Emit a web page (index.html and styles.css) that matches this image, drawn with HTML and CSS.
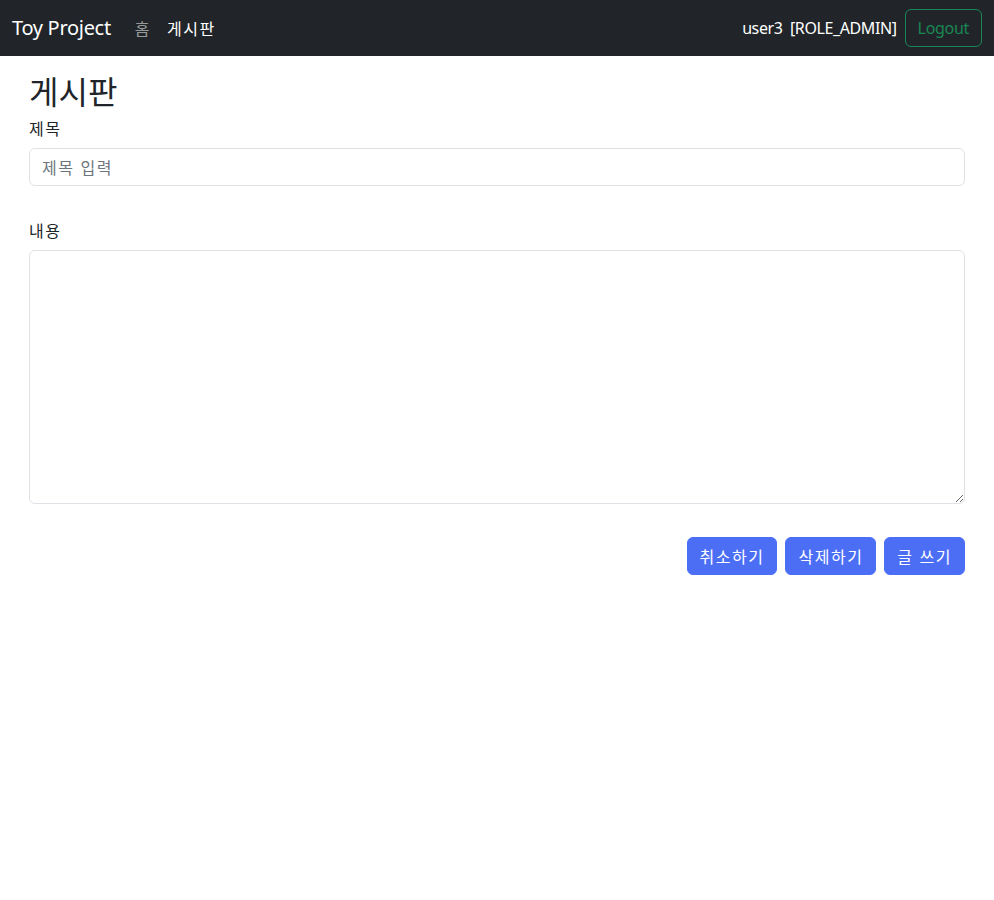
FILE: index.html
```html
<!DOCTYPE html>
<html lang="ko">
<head>
<meta charset="utf-8">
<title>Toy Project</title>
<link rel="stylesheet" href="styles.css">
</head>
<body>
<nav class="navbar">
  <div class="nav-inner">
    <div class="nav-left">
      <a class="brand" href="#">Toy Project</a>
      <ul class="nav-links">
        <li><a class="nav-link" href="#">홈</a></li>
        <li><a class="nav-link active" href="#">게시판</a></li>
      </ul>
    </div>
    <div class="nav-right">
      <span class="user">user3&nbsp; [ROLE_ADMIN]</span>
      <button class="btn-outline-success" type="button">Logout</button>
    </div>
  </div>
</nav>
<main class="container">
  <h2 class="title">게시판</h2>
  <form class="board-form">
    <div class="field field-title">
      <label class="label" for="title">제목</label>
      <input class="control" id="title" type="text" placeholder="제목 입력">
    </div>
    <div class="field">
      <label class="label" for="content">내용</label>
      <textarea class="control area" id="content" rows="10"></textarea>
    </div>
    <div class="actions">
      <button class="btn-primary" type="button">취소하기</button>
      <button class="btn-primary" type="button">삭제하기</button>
      <button class="btn-primary" type="button">글 쓰기</button>
    </div>
  </form>
</main>
</body>
</html>
```
FILE: styles.css
```css
* { box-sizing: border-box; }
html, body {
  margin: 0;
  padding: 0;
}
body {
  font-family: "Noto Sans", "Noto Sans CJK KR", sans-serif;
  font-size: 16px;
  line-height: 24px;
  color: #212529;
  background: #fff;
}
.navbar {
  background: #212529;
  height: 56px;
}
.nav-inner {
  height: 56px;
  padding: 0 12px;
  display: flex;
  align-items: center;
  justify-content: space-between;
}
.nav-left {
  display: flex;
  align-items: center;
}
.brand {
  font-size: 20px;
  line-height: 30px;
  color: #fff;
  text-decoration: none;
  margin-right: 16px;
  letter-spacing: -0.3px;
}
.nav-links {
  list-style: none;
  margin: 0;
  padding: 0;
  display: flex;
}
.nav-link {
  display: block;
  padding: 8px;
  color: rgba(255, 255, 255, 0.55);
  text-decoration: none;
  font-family: "Noto Sans CJK KR", sans-serif;
  letter-spacing: 1.5px;
}
.nav-link.active { color: #fff; }
.nav-right {
  display: flex;
  align-items: center;
  gap: 8px;
}
.user {
  color: #fff;
  letter-spacing: -0.4px;
}
.btn-outline-success {
  font-family: inherit;
  font-size: 16px;
  line-height: 24px;
  height: 38px;
  padding: 6px 12px;
  color: #198754;
  background: transparent;
  border: 1px solid #198754;
  border-radius: 6px;
  letter-spacing: -0.3px;
}
.container {
  width: 960px;
  margin: 0 auto;
  padding: 16px 12px 0;
}
.title {
  font-family: "Noto Sans CJK KR", sans-serif;
  font-weight: 400;
  font-size: 32px;
  line-height: 36px;
  margin: 0 0 8px;
}
.field {
  display: flex;
  flex-direction: column;
}
.field-title { margin-bottom: 32px; }
.label {
  font-family: "Noto Sans CJK KR", sans-serif;
  letter-spacing: 1.5px;
  margin-bottom: 8px;
}
.control {
  display: block;
  width: 100%;
  height: 38px;
  padding: 6px 12px;
  font-family: "Noto Sans CJK KR", sans-serif;
  font-size: 16px;
  line-height: 24px;
  color: #212529;
  border: 1px solid #dee2e6;
  border-radius: 6px;
  background: #fff;
  outline: none;
}
.control::placeholder { color: #6c757d; letter-spacing: 1.5px; }
.area {
  height: 254px;
  resize: vertical;
  margin: 0;
}
.actions {
  margin-top: 33px;
  display: flex;
  justify-content: flex-end;
  gap: 8px;
}
.btn-primary {
  font-family: "Noto Sans CJK KR", sans-serif;
  font-size: 16px;
  line-height: 24px;
  height: 38px;
  padding: 6px 12px;
  color: #fff;
  background: #4c6ef5;
  border: 1px solid #4c6ef5;
  border-radius: 6px;
  letter-spacing: 1.5px;
}
```
